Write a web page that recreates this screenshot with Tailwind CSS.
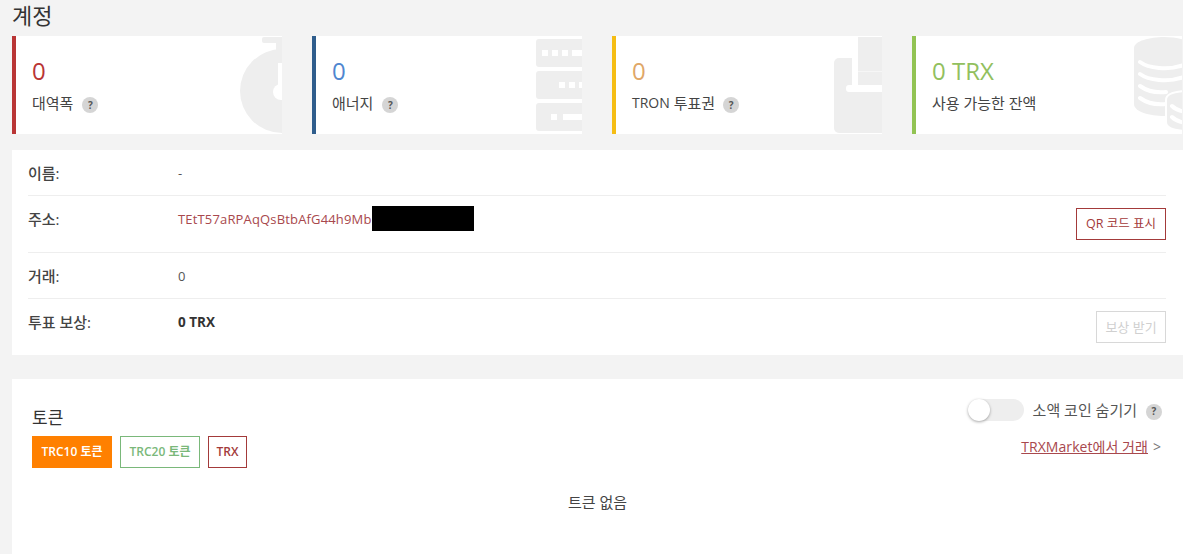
<!DOCTYPE html>
<html lang="ko">
  <head>
    <meta charset="UTF-8" />
    <meta name="viewport" content="width=device-width, initial-scale=1.0" />
    <title>계정</title>
    <script src="https://cdn.jsdelivr.net/npm/@tailwindcss/browser@4"></script>
  </head>
  <body class="bg-[#f3f3f3] h-[554px] overflow-hidden font-['Open_Sans','Noto_Sans_CJK_KR',sans-serif] text-[#444]">
    <h1 class="pl-3 h-9 text-[22px] leading-[30px] font-normal text-[#333]">계정</h1>

    <!-- stat cards -->
    <div class="flex gap-[30px] pl-3">
      <div class="relative w-[270px] h-[98px] bg-white border-l-4 border-[#b93535] pl-4 pt-[19px] overflow-hidden">
        <p class="text-[24px] leading-8 text-[#b93535]">0</p>
        <p class="flex items-center text-[15px] leading-5 mt-[6px]">대역폭<span class="ml-[9px] mt-[4px] w-4 h-4 rounded-full bg-[#d5d5d5] text-[10px] font-bold text-[#555] flex items-center justify-center">?</span></p>
        <svg class="absolute right-0 top-0" width="50" height="98" viewBox="0 0 50 98">
          <rect x="30" y="1" width="20" height="6" rx="2" fill="#eee" />
          <rect x="44" y="1" width="6" height="16" fill="#eee" />
          <circle cx="50" cy="55" r="42" fill="#eee" />
          <circle cx="49" cy="56" r="8" fill="#fff" />
          <rect x="46" y="27" width="4" height="26" fill="#fff" />
        </svg>
      </div>

      <div class="relative w-[270px] h-[98px] bg-white border-l-4 border-[#2f5d8c] pl-4 pt-[19px] overflow-hidden">
        <p class="text-[24px] leading-8 text-[#4f86d0]">0</p>
        <p class="flex items-center text-[15px] leading-5 mt-[6px]">애너지<span class="ml-[9px] mt-[4px] w-4 h-4 rounded-full bg-[#d5d5d5] text-[10px] font-bold text-[#555] flex items-center justify-center">?</span></p>
        <svg class="absolute right-0 top-0" width="46" height="98" viewBox="0 0 46 98">
          <rect x="0" y="3" width="56" height="28" rx="3" fill="#eee" />
          <rect x="0" y="35" width="56" height="28" rx="3" fill="#eee" />
          <rect x="0" y="67" width="56" height="28" rx="3" fill="#eee" />
          <path fill="#fff" d="M6 14h6v6H6zM16 14h6v6h-6zM26 14h6v6h-6zM36 14h10v6H36zM23 46h6v6h-6zM33 46h6v6h-6zM43 46h3v6h-3zM15 78h6v6h-6zM27 78h19v6H27z" />
        </svg>
      </div>

      <div class="relative w-[270px] h-[98px] bg-white border-l-4 border-[#f5bd14] pl-4 pt-[19px] overflow-hidden">
        <p class="text-[24px] leading-8 text-[#dfa768]">0</p>
        <p class="flex items-center text-[15px] leading-5 mt-[6px]"><span class="text-[14px]">TRON</span>&nbsp;투표권<span class="ml-[8px] mt-[4px] w-4 h-4 rounded-full bg-[#d5d5d5] text-[10px] font-bold text-[#555] flex items-center justify-center">?</span></p>
        <svg class="absolute right-0 top-0" width="48" height="98" viewBox="0 0 48 98">
          <rect x="0" y="22" width="60" height="75" rx="5" fill="#eee" />
          <rect x="18" y="20" width="6" height="29" fill="#fff" />
          <rect x="24" y="1" width="24" height="48" fill="#eee" />
          <rect x="24" y="35" width="24" height="1" fill="#f6f6f6" />
          <rect x="12" y="49" width="36" height="7" rx="3" fill="#fff" />
          <rect x="24" y="49" width="24" height="7" fill="#fff" />
        </svg>
      </div>

      <div class="relative w-[270px] h-[98px] bg-white border-l-4 border-[#92c353] pl-4 pt-[19px] overflow-hidden">
        <p class="text-[24px] leading-8 text-[#92c05e]">0 TRX</p>
        <p class="flex items-center text-[15px] leading-5 mt-[6px]">사용 가능한 잔액</p>
        <svg class="absolute right-0 top-0" width="48" height="98" viewBox="0 0 48 98">
          <path fill="#eee" d="M0 12C0 5 16 1 30 1s30 4 30 11v56c0 8-16 12-30 12S0 76 0 68z" />
          <path fill="none" stroke="#fff" stroke-width="4" stroke-linecap="round" d="M6 26c8 6 28 9 44 3M6 38c8 6 28 9 44 3M6 50c7 5 17 7 26 6M6 62c7 5 17 7 26 6" />
          <path fill="#eee" stroke="#fff" stroke-width="2" d="M32 64c0-6 9-9 24-9v40c-15 0-24-3-24-9z" />
          <path fill="none" stroke="#fff" stroke-width="4" stroke-linecap="round" d="M38 70c3 3 7 5 14 6M38 81c3 3 7 5 14 6" />
        </svg>
      </div>
    </div>

    <!-- account details -->
    <div class="ml-3 mt-4 h-[205px] bg-white pl-4 pr-[17px] text-[13px] leading-5">
      <div class="flex h-[46px] pt-[13px] border-b border-[#eee]">
        <span class="w-[150px] text-[15px] font-medium">이름:</span>
        <span class="text-[#555]">-</span>
      </div>
      <div class="flex h-[57px] pt-[13px] border-b border-[#eee]">
        <span class="w-[150px] text-[15px] font-medium">주소:</span>
        <span class="text-[#a8484d] tracking-[0.16px]">TEtT57aRPAqQsBtbAfG44h9Mb</span>
        <span class="w-[102px] h-[25px] -mt-[3px] bg-black"></span>
        <button class="ml-auto -mt-[1px] w-[90px] h-8 border border-[#a33a3a] text-[#a33a3a] text-[12.5px]">QR 코드 표시</button>
      </div>
      <div class="flex h-[46px] pt-[13px] border-b border-[#eee]">
        <span class="w-[150px] text-[15px] font-medium">거래:</span>
        <span class="text-[#555]">0</span>
      </div>
      <div class="flex pt-[13px]">
        <span class="w-[150px] text-[15px] font-medium">투표 보상:</span>
        <span class="text-[13.5px] font-bold text-[#333]">0 TRX</span>
        <button class="ml-auto -mt-[1px] w-[70px] h-8 border border-[#d8d8d8] text-[#d0d0d0] text-[13px]">보상 받기</button>
      </div>
    </div>

    <!-- tokens -->
    <div class="ml-3 mt-6 h-[200px] bg-white px-5 relative">
      <div class="flex justify-between">
        <div class="pt-[29px]">
          <h2 class="text-[17px] leading-5 font-normal text-[#333]">토큰</h2>
          <div class="flex gap-2 mt-2 text-[12px] font-semibold">
            <button class="w-20 h-8 bg-[#ff8000] text-white">TRC10 토큰</button>
            <button class="w-20 h-8 border border-[#7ab87a] text-[#7ab87a]">TRC20 토큰</button>
            <button class="w-[39px] h-8 border border-[#a33a3a] text-[#a33a3a]">TRX</button>
          </div>
        </div>
        <div class="flex flex-col items-end pt-5 pr-[1px]">
          <div class="flex items-center">
            <span class="relative w-14 h-[22px] rounded-full bg-[#eee]">
              <span class="absolute left-0 top-0 w-[22px] h-[22px] rounded-full bg-white shadow-[0_1px_3px_rgba(0,0,0,0.35)]"></span>
            </span>
            <span class="ml-[9px] text-[15px] leading-5 text-[#555]">소액 코인 숨기기</span>
            <span class="ml-[9px] mt-[3px] w-4 h-4 rounded-full bg-[#d5d5d5] text-[10px] font-bold text-[#555] flex items-center justify-center">?</span>
          </div>
          <p class="mt-[16px] text-[14px] leading-5 text-[#a8484d] mr-[1px]"><a href="#" class="underline tracking-[0.06px]">TRXMarket에서 거래</a><span class="ml-[5px] text-[#777]">&gt;</span></p>
        </div>
      </div>
      <p class="mt-[24px] text-center text-[15px] leading-5">트큰 없음</p>
    </div>
  </body>
</html>
